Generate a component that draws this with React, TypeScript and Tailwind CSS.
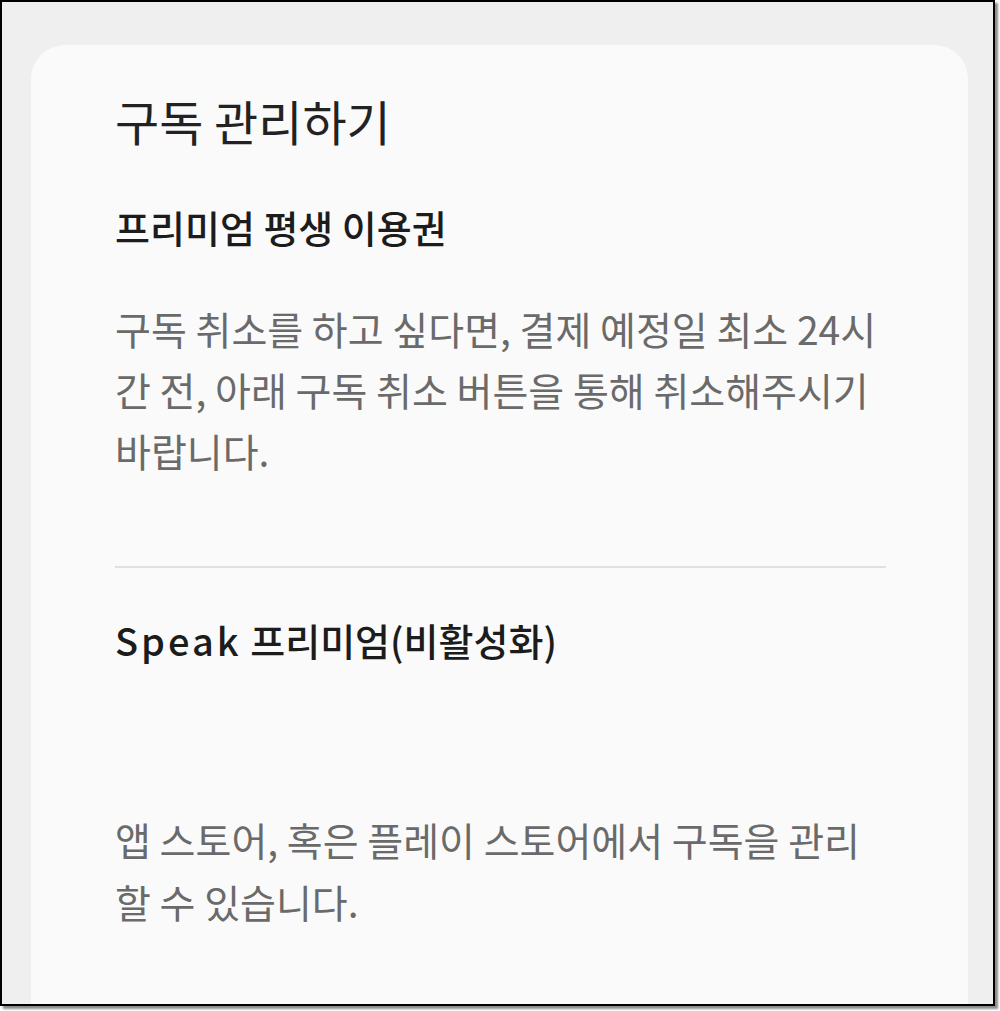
export default function App() {
  return (
    <div className="w-[1000px] h-[1011px] bg-white" style={{ fontFamily: '"Noto Sans CJK KR", "Noto Sans", sans-serif' }}>
      <div className="w-[995px] h-[1006px] border-2 border-black bg-[#efefef] shadow-[3px_3px_2px_rgba(0,0,0,0.45)] overflow-hidden pt-[43px] pl-[29px] pr-[25px]">
        <div className="h-full bg-[#fafafa] rounded-t-[34px] pt-[47px] pl-[84px] pr-[82px] whitespace-nowrap">
          <h1 className="text-[48px] leading-[56px] text-[#222222] font-normal">구독 관리하기</h1>
          <h2 className="mt-[56px] text-[38px] leading-[46px] text-[#1c1c1c] font-medium">프리미엄 평생 이용권</h2>
          <p className="mt-[48px] text-[39px] leading-[61px] text-[#6a6a6a]">
            구독 취소를 하고 싶다면, 결제 예정일 최소 24시
            <br />
            간 전, 아래 구독 취소 버튼을 통해 취소해주시기
            <br />
            바랍니다.
          </p>
          <div className="mt-[85px] h-[2px] bg-[#e0e0e0]" />
          <h2 className="mt-[49px] text-[38px] leading-[46px] text-[#1c1c1c] font-medium">
            <span className="tracking-[3px]">Speak</span> 프리미엄(비활성화)
          </h2>
          <p className="mt-[145px] text-[39px] leading-[62px] text-[#6a6a6a]">
            앱 스토어, 혹은 플레이 스토어에서 구독을 관리
            <br />
            할 수 있습니다.
          </p>
        </div>
      </div>
    </div>
  );
}
